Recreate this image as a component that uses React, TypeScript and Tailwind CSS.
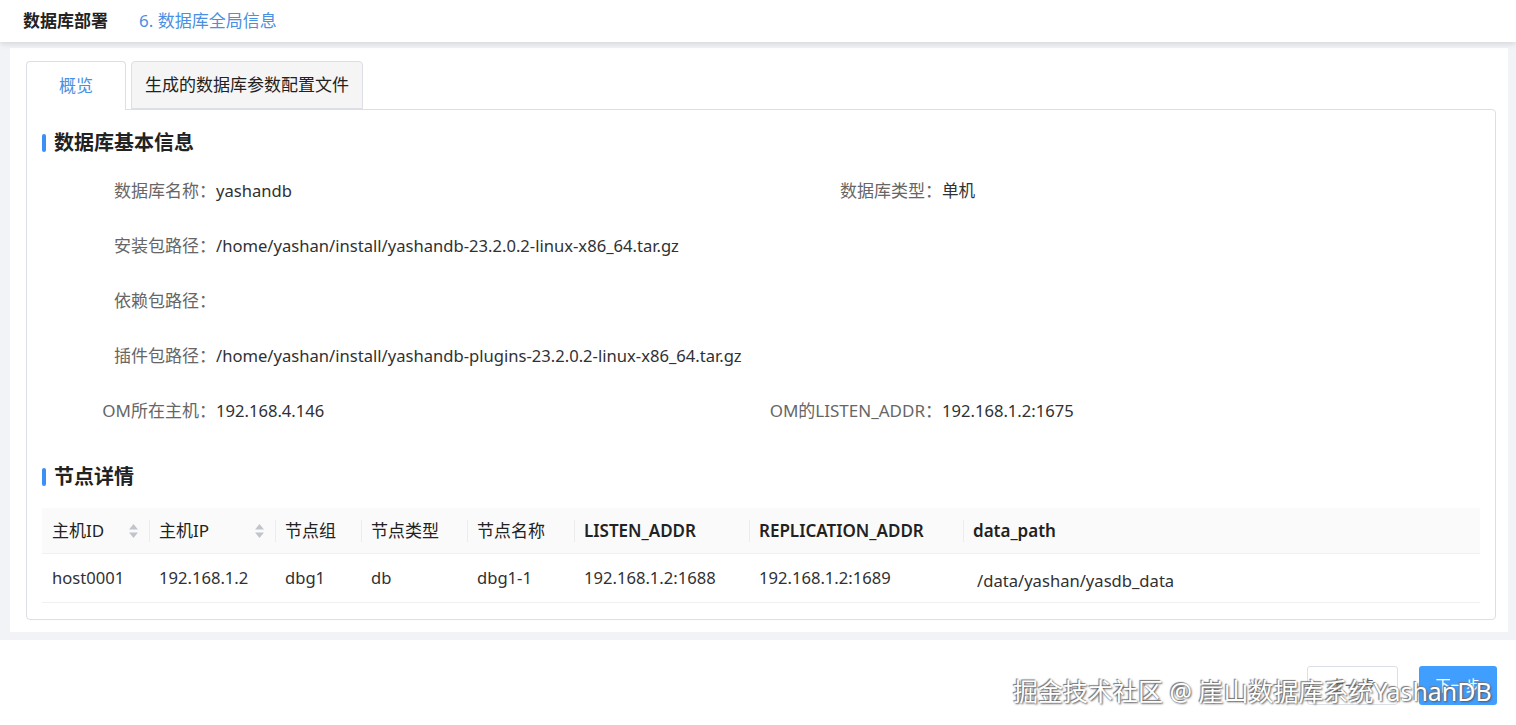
import React from 'react';

const font = { fontFamily: '"Noto Sans", "Noto Sans CJK SC", sans-serif' };

interface InfoItem {
  label: string;
  value: string;
}

const infoRows: InfoItem[][] = [
  [
    { label: '数据库名称：', value: 'yashandb' },
    { label: '数据库类型：', value: '单机' },
  ],
  [{ label: '安装包路径：', value: '/home/yashan/install/yashandb-23.2.0.2-linux-x86_64.tar.gz' }],
  [{ label: '依赖包路径：', value: '' }],
  [{ label: '插件包路径：', value: '/home/yashan/install/yashandb-plugins-23.2.0.2-linux-x86_64.tar.gz' }],
  [
    { label: 'OM所在主机：', value: '192.168.4.146' },
    { label: 'OM的LISTEN_ADDR：', value: '192.168.1.2:1675' },
  ],
];

const columns = [
  { title: '主机ID', width: 'w-[107px]', sort: true, bold: false },
  { title: '主机IP', width: 'w-[126px]', sort: true, bold: false },
  { title: '节点组', width: 'w-[86px]', sort: false, bold: false },
  { title: '节点类型', width: 'w-[106px]', sort: false, bold: false },
  { title: '节点名称', width: 'w-[107px]', sort: false, bold: false },
  { title: 'LISTEN_ADDR', width: 'w-[175px]', sort: false, bold: true },
  { title: 'REPLICATION_ADDR', width: 'w-[214px]', sort: false, bold: true },
  { title: 'data_path', width: 'flex-1', sort: false, bold: true },
];

const row = ['host0001', '192.168.1.2', 'dbg1', 'db', 'dbg1-1', '192.168.1.2:1688', '192.168.1.2:1689', '/data/yashan/yasdb_data'];

const SortIcon = () => (
  <svg width="11" height="18" viewBox="0 0 11 18" className="shrink-0">
    <path d="M5.5 2 L10 7.5 H1 Z" fill="#c0c4cc" />
    <path d="M5.5 16 L10 10.5 H1 Z" fill="#c0c4cc" />
  </svg>
);

const SectionTitle = ({ text }: { text: string }) => (
  <div className="flex items-center gap-2 h-[26px]">
    <div className="w-1 h-[18px] rounded-full bg-[#3b8ff5]" />
    <span className="text-[20px] font-bold text-[#222]">{text}</span>
  </div>
);

export default function App() {
  return (
    <div className="relative w-[1516px] h-[725px] bg-[#f2f3f7] overflow-hidden text-[17px]" style={font}>
      {/* Header */}
      <div className="h-[42px] bg-white flex items-center gap-[31px] pl-[23px] shadow-[0_2px_6px_rgba(0,0,0,0.12)] relative z-10">
        <span className="font-bold text-[17px] text-[#222]">数据库部署</span>
        <span className="text-[17px] text-[#4a90e2]">6. 数据库全局信息</span>
      </div>

      {/* Main */}
      <div className="ml-[10px] mr-[8px] mt-[6px] h-[584px] bg-white pl-4 pr-[12px] pt-3">
        {/* Tabs */}
        <div className="flex items-end gap-[5px] h-[49px]">
          <div className="w-[100px] h-[49px] bg-white border border-b-0 border-[#dcdfe6] rounded-t-[4px] flex items-center justify-center text-[#4a90e2] relative z-10 -mb-px">
            概览
          </div>
          <div className="px-[13px] h-[48px] bg-[#f5f5f5] border border-[#dcdfe6] rounded-t-[4px] flex items-center text-[#222]">
            生成的数据库参数配置文件
          </div>
        </div>

        {/* Card */}
        <div className="h-[511px] border border-[#dcdfe6] rounded-[4px] rounded-tl-none px-[15px] pt-[20px]">
          <SectionTitle text="数据库基本信息" />
          <div className="mt-[22px] flex flex-col gap-[29px]">
            {infoRows.map((r, i) => (
              <div key={i} className="grid grid-cols-2 h-[26px]">
                {r.map((item, j) => (
                  <div key={item.label} className="flex items-center">
                    <span className={`${j === 0 ? 'w-[174px]' : 'w-[181px]'} text-right text-[#666] whitespace-nowrap`}>
                      {item.label}
                    </span>
                    <span className="text-[16.6px] text-[#303133] whitespace-nowrap">{item.value}</span>
                  </div>
                ))}
              </div>
            ))}
          </div>

          <div className="mt-[40px]">
            <SectionTitle text="节点详情" />
          </div>

          {/* Table */}
          <div className="mt-[18px]">
            <div className="flex h-[46px] bg-[#fafafa] border-b border-[#f0f0f0]">
              {columns.map((c, i) => (
                <div key={c.title} className={`${c.width} flex items-center relative px-[10px]`}>
                  {i > 0 && <div className="absolute left-0 top-[12px] h-[22px] w-px bg-[#ececec]" />}
                  <span className={`flex-1 text-[#222] whitespace-nowrap ${c.bold ? 'font-semibold' : ''}`}>{c.title}</span>
                  {c.sort && <SortIcon />}
                </div>
              ))}
            </div>
            <div className="flex h-[49px] border-b border-[#f0f0f0]">
              {columns.map((c, i) => (
                <div
                  key={c.title}
                  className={`${c.width} flex items-center text-[16.6px] text-[#303133] whitespace-nowrap ${i === 7 ? 'pl-[14px] pt-[6px]' : 'px-[10px]'}`}
                >
                  {row[i]}
                </div>
              ))}
            </div>
          </div>
        </div>
      </div>

      {/* Footer */}
      <div className="absolute left-0 right-0 bottom-0 h-[85px] bg-white flex items-center justify-end gap-[21px] pr-[19px] pt-[5px]">
        <button className="w-[91px] h-[39px] border border-[#dcdfe6] rounded-[3px] bg-white text-[15px] text-[#606266]">
          上一步
        </button>
        <button className="w-[78px] h-[39px] rounded-[3px] bg-[#409eff] text-[15px] text-white">下一步</button>
      </div>

      {/* Watermark */}
      <div className="absolute left-[1013px] top-[673px] text-[25px] text-white whitespace-nowrap pointer-events-none z-20 [text-shadow:1px_1px_2px_#555,-1px_-1px_1px_#777]">
        掘金技术社区 @ 崖山数据库系统YashanDB
      </div>
    </div>
  );
}
